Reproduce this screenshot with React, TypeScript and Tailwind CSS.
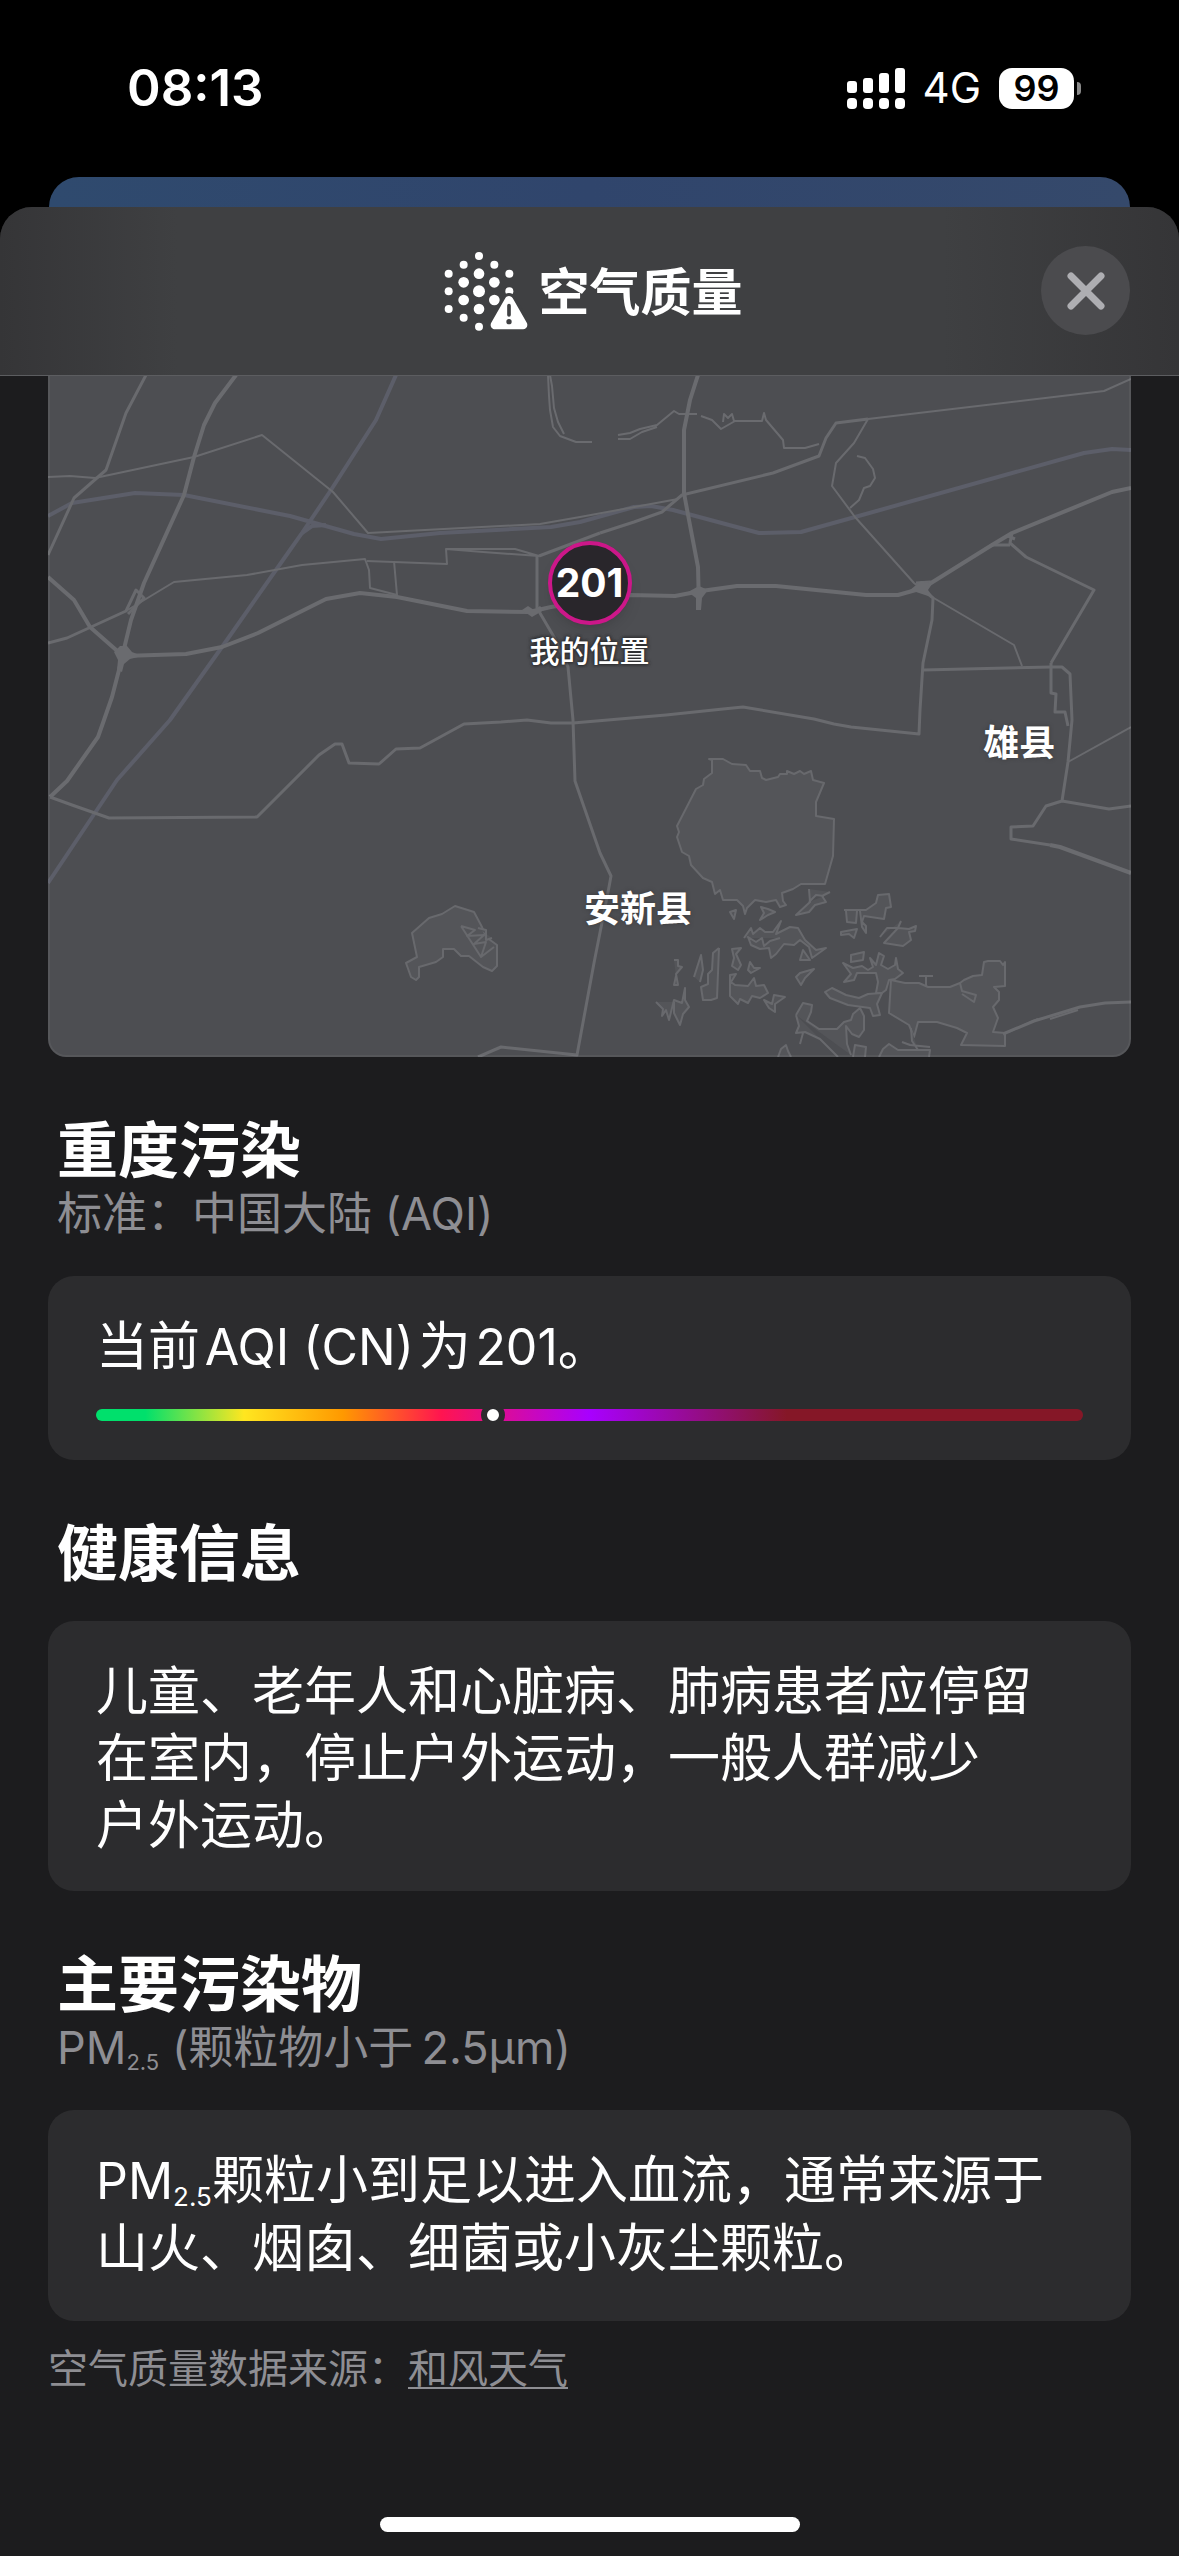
import type { ReactNode } from 'react';

const AQI = 201;
const AQI_MAX = 500;

// 浅色道路
const mainRoads = [
    'M188 -1 167 27 156 49 146 81 136 119 96 207 83 244 75 277 71 294 64 321 56 344 50 361 19 405 2 421',
    'M0 201 26 224 42 251 75 280 138 278 174 271 210 257 278 223 312 217 349 221 419 235 481 236 503 231 582 219 627 220 653 215 689 210 728 210 818 219 850 219 875 212 944 169 964 157 1064 116 1083 112',
    'M650 -1 642 24 636 54 636 117 641 144 650 191 651 232',
    'M1002 469 1012 471 1083 497',
];

const roads = [
    'M98 -1 78 37 58 94 26 122 0 179',
    'M0 267 19 262 78 235 88 214 96 222 80 238',
    'M2 421 24 429 61 442 209 441 271 379 287 368 294 368 301 387 331 388 348 373 372 372 416 348 453 346 479 344 503 347 525 347 618 339 675 333 695 331 766 343 786 348 803 351 871 358 872 334 875 287 884 244 885 222 873 212',
    'M875 294 1003 291 1014 291 1022 298 1024 344 1020 386 1014 425 998 430 985 450 963 451 963 463 1002 469',
    'M1014 425 1061 433 1083 430',
    'M1003 287 1046 214 978 181 962 167 964 157 M944 169 962 169 M960 160 967 163',
    'M1003 287 1003 317 1008 318 1007 336 1017 336 1020 350',
    'M489 180 489 232 506 261 520 291 525 344 527 405 552 477 563 500 561 511 546 587 529 679 453 671 430 681',
    'M552 157 586 146 614 136 634 119 725 97 771 80 778 62 788 47 820 43',
    'M491 180 552 157',
    'M868 207 882 206 875 212',
    'M955 658 986 645 1032 631 1057 627 1083 626',
];

const thinRoads = [
    'M0 101 22 100 47 102 146 81 214 59 285 116 320 157 492 148 532 141 630 123',
    'M78 235 126 206 199 199 254 189 317 183 321 194 322 212 349 219 346 185',
    'M319 185 399 188 398 173 467 173 491 180 435 176 398 173',
    'M820 43 1056 15 1083 3',
    'M820 43 806 67 788 87 784 110 807 141 866 207 884 221 966 269 974 290',
    'M1020 386 1083 351',
    'M1002 643 1030 634 M960 656 990 643',
];

const railways = [
    'M0 140 24 127 87 117 136 119 242 140 306 158 333 163 392 157 503 151 532 146 586 131 603 130 625 134 711 157 753 156 807 141 1036 77 1064 73 1083 74',
    'M348 -1 328 44 283 114 254 157 242 174 174 271 122 344 69 404 0 507',
    'M254 157 264 150 278 149',
];

const rivers = [
    'M500 -1 501 20 502 34 505 51 512 60 528 66 544 66 M502 -1 504 10 506 32 510 46 516 58',
    'M570 59 582 57 592 53 609 49 626 35 631 38 649 38 M570 63 582 63 594 56 609 51',
    'M653 40 664 44 673 53 687 45 714 45 716 37 718 44 735 64 736 72 757 72 771 68 M675 46 676 38 680 42 684 38 686 45',
    'M809 80 817 82 825 93 827 102 822 110 816 112 811 124 802 132',
];

const lakes = [
    'M364 557 381 542 394 538 407 530 426 536 434 551 438 561 449 569 449 590 444 595 435 591 421 580 413 580 406 573 395 573 395 581 388 586 371 591 371 601 368 604 363 601 358 587 369 581z',
    'M413 550 427 554 419 560 436 559 426 568 438 566 433 581 446 571 M413 550 433 581 M430 552 438 554 438 564 444 562',
    'M661 383 675 383 684 388 698 389 702 395 712 395 714 402 718 404 730 401 732 398 739 398 739 395 746 398 752 395 756 398 763 395 765 404 776 407 768 426 768 440 786 443 785 480 777 508 753 508 745 513 734 517 735 525 738 529 732 531 728 524 718 526 707 524 699 532 697 538 695 530 689 524 675 524 672 514 667 518 664 506 655 502 643 489 641 480 634 476 629 461 631 456 629 450 648 413 655 409 656 403 664 397 664 384z',
    'M843 604 857 607 871 607 880 611 902 611 912 607 916 604 925 600 934 599 936 586 940 585 952 585 955 589 957 586 957 610 946 611 951 616 951 624 945 631 950 642 945 656 957 657 957 670 913 669 919 657 909 652 889 646 870 646 866 661 861 649 841 637z',
    'M871 600 885 600 M878 600 878 610 M912 607 914 615 928 619 926 626 914 618',
    'M761 513 762 526 748 539 761 536 767 529 778 526 774 520 782 516 M761 526 768 519 776 520',
    'M796 534 818 534 828 527 830 519 841 518 843 531 838 532 836 543 816 540 814 546 818 550 818 557 814 551 812 535 M798 535 799 546 808 547 809 535',
    'M832 561 839 552 850 552 853 545 M850 552 861 553 868 550 867 555 861 556 863 564 855 570 836 567z',
    'M696 562 703 552 705 558 712 552 717 556 725 556 733 545 728 558 742 551 750 552 757 564 768 574 778 572 764 582 761 571 752 564 746 569 736 568 728 578 723 582 721 572 712 573 703 569 700 561 708 566 714 562 716 570 722 565 732 562',
    'M646 601 653 579 655 594 652 606 M671 572 669 622 663 624 655 624 653 611 660 608 660 598 664 594 665 577 671 572',
    'M626 584 630 584 630 590 634 591 628 598 630 609 626 609 628 600',
    'M608 626 615 633 614 640 618 634 621 644 626 624 634 627 637 612 637 624 641 631 635 638 632 649 626 637 626 626',
    'M684 573 693 572 688 578 693 589 690 594 684 590 686 582z',
    'M682 599 688 598 683 606 687 609 700 610 706 602 708 610 716 609 720 617 712 622 704 620 700 627 692 623 690 628 682 620z',
    'M702 586 706 592 712 592 703 597 700 594z',
    'M716 624 724 628 726 619 737 621 727 628 727 636 721 632z',
    'M748 601 752 597 766 593 757 602 753 609z M752 584 755 574 762 584z',
    'M793 556 809 553 806 562 801 558 793 559z M803 586 803 579 816 576 815 584z',
    'M682 536 688 534 686 543z M713 531 720 533 727 536 720 539 712 544 716 537z',
    'M795 587 805 592 814 590 820 594 825 591 822 582 828 589 831 577 836 580 833 589 840 593 847 589 848 582 850 593 855 597 847 603 841 604 838 614 834 617 828 617 830 606 828 597 809 597 806 604 796 606 803 598z',
    'M777 616 784 612 798 619 811 622 820 618 834 617 829 628 832 639 825 640 822 632 800 629 782 622z',
    'M748 639 755 627 764 629 763 636 759 645 771 653 789 653 796 646 803 644 805 638 812 632 816 640 816 654 811 661 804 658 798 650 799 668 803 679 M748 639 751 650 748 657 757 656 772 663 790 681 M755 657 752 668',
    'M730 681 733 673 738 669 740 675 743 681 M805 681 807 669 818 671 817 681',
    'M831 681 835 673 841 668 850 674 882 674 881 681 M863 652 864 665 870 674 M854 666 862 669 882 671',
];

const particles = [
    [238, 72, 12], [192, 98, 12], [284, 98, 12], [147, 125, 12], [329, 125, 12],
    [238, 125, 16], [192, 151, 16], [284, 151, 16], [147, 178, 12], [238, 178, 18],
    [192, 204, 16], [284, 204, 16], [147, 231, 12], [238, 231, 16], [192, 257, 12], [238, 284, 12],
];

function StatusBar() {
    return (
        <div className="flex h-[177px] items-start justify-between pt-14 pr-[98px] pl-[127px]">
            <span className="text-[51px] leading-[64px] font-semibold">08:13</span>
            <div className="flex h-16 items-center gap-[18px]">
                <svg viewBox="0 0 58 41" className="h-[41px] w-[58px] fill-white">
                    <rect x="0" y="13" width="10" height="12" rx="3" />
                    <rect x="16" y="10" width="10" height="15" rx="3" />
                    <rect x="32" y="5" width="10" height="20" rx="3" />
                    <rect x="48" y="0" width="10" height="25" rx="3" />
                    <rect x="0" y="30" width="10" height="11" rx="4" />
                    <rect x="16" y="30" width="10" height="11" rx="4" />
                    <rect x="32" y="30" width="10" height="11" rx="4" />
                    <rect x="48" y="30" width="10" height="11" rx="4" />
                </svg>
                <span className="text-[42px] leading-[48px]">4G</span>
                <div className="flex items-center gap-[3px]">
                    <div className="flex h-[41px] w-[75px] items-center justify-center rounded-[13px] bg-white text-[36px] font-semibold text-black">
                        99
                    </div>
                    <div className="h-[13px] w-1 rounded-r-full bg-[#8a8a8a]" />
                </div>
            </div>
        </div>
    );
}

function AirQualityIcon() {
    return (
        <svg viewBox="133 57 252 243" className="h-[81px] w-[84px] fill-white">
            {particles.map(([x, y, r]) => (
                <circle key={`${x}-${y}`} cx={x} cy={y} r={r} />
            ))}
            <circle cx="329" cy="178" r="12" />
            <path
                d="M328 205 286 279H370z"
                className="fill-[#3f4042] stroke-[#3f4042] stroke-[44]"
                strokeLinejoin="round"
            />
            <path d="M328 205 286 279H370z" className="stroke-white stroke-[26]" strokeLinejoin="round" />
            <path d="M328 221v28" className="stroke-[#3f4042] stroke-[11]" strokeLinecap="round" />
            <circle cx="328" cy="269" r="8" className="fill-[#3f4042]" />
        </svg>
    );
}

function SheetHeader() {
    return (
        <header className="relative flex h-[169px] items-center justify-center rounded-t-[32px] border-b border-[#5c5d60] bg-[linear-gradient(to_right,#353537,#3f4042_15%,#3f4042_80%,#353537)]">
            <h1 className="flex items-center gap-[10px] pl-2 text-[51px] leading-[64px] font-semibold">
                <AirQualityIcon />
                <span className="pt-[3px]">空气质量</span>
            </h1>
            <button
                type="button"
                aria-label="关闭"
                className="absolute top-[39px] right-[49px] flex size-[89px] items-center justify-center rounded-full bg-[#4b4b4e]"
            >
                <svg viewBox="0 0 38 38" className="size-[38px] stroke-[#aeaeb2]" strokeWidth="7" strokeLinecap="round">
                    <path d="M4 4 34 34M34 4 4 34" />
                </svg>
            </button>
        </header>
    );
}

function AirMap() {
    return (
        <div className="relative mx-12 h-[681px] overflow-hidden rounded-b-[18px] bg-[#4d4e52]">
            <svg
                viewBox="0 0 1083 681"
                preserveAspectRatio="xMidYMid slice"
                className="size-full fill-none"
                strokeLinejoin="round"
            >
                <g className="fill-[#545559] stroke-[#68696d]" strokeWidth="2">
                    {lakes.map((d) => (
                        <path key={d} d={d} />
                    ))}
                </g>
                <g className="stroke-[#6a6b6f]" strokeWidth="2">
                    {rivers.map((d) => (
                        <path key={d} d={d} />
                    ))}
                </g>
                <g className="stroke-[#5c5e69]" strokeWidth="4">
                    {railways.map((d) => (
                        <path key={d} d={d} />
                    ))}
                </g>
                <g className="stroke-[#696a6e]" strokeWidth="2">
                    {thinRoads.map((d) => (
                        <path key={d} d={d} />
                    ))}
                </g>
                <g className="stroke-[#696a6e]" strokeWidth="3">
                    {roads.map((d) => (
                        <path key={d} d={d} />
                    ))}
                </g>
                <g className="stroke-[#6a6b6f]" strokeWidth="4">
                    {mainRoads.map((d) => (
                        <path key={d} d={d} />
                    ))}
                </g>
                {/* 立交 */}
                <g className="fill-[#6a6b6f]">
                    <path d="M66 276 72 270 79 270 84 276 94 280 82 283 76 288 74 296 69 294 70 284z" />
                    <path d="M474 234 480 230 486 234 492 230 496 234 484 241z" />
                    <path d="M640 216 651 210 660 214 654 222 653 234 648 234 648 222z" />
                    <path d="M862 214 873 205 884 208 880 214 886 222z" />
                </g>
            </svg>

            {/* 当前位置 */}
            <div className="absolute top-[165px] left-1/2 flex -translate-x-1/2 flex-col items-center">
                <div className="flex size-[84px] items-center justify-center rounded-full border-4 border-[#cc1789] bg-[#29262b] text-[39px] font-bold shadow-lg">
                    {AQI}
                </div>
                <span className="mt-1 text-[30px] leading-[44px] font-medium [text-shadow:0_0_3px_#2c2c2e,0_0_3px_#2c2c2e,0_0_4px_#2c2c2e]">
                    我的位置
                </span>
            </div>
            <span className="absolute top-[342px] right-[7%] text-[36px] leading-[50px] font-semibold [text-shadow:0_0_4px_#3a3a3c]">
                雄县
            </span>
            <span className="absolute top-[508px] left-[49.5%] text-[36px] leading-[50px] font-semibold [text-shadow:0_0_4px_#3a3a3c]">
                安新县
            </span>
            <div className="absolute inset-0 rounded-b-[18px] border-x-2 border-b-2 border-white/5" />
        </div>
    );
}

function Section({ title, subtitle, children }: { title: string; subtitle?: ReactNode; children: ReactNode }) {
    return (
        <section className="mt-[60px]">
            <h2 className="px-[9px] text-[61px] leading-[68px] font-bold">{title}</h2>
            {subtitle && <p className="px-[9px] text-[45px] leading-[58px] text-[#8e8e93]">{subtitle}</p>}
            <div className="mt-[33px] rounded-[26px] bg-[#2c2c2e] px-12 pt-[37px] pb-8 text-[52px] leading-[67px]">
                {children}
            </div>
        </section>
    );
}

function AqiScale({ value }: { value: number }) {
    return (
        <div className="relative mt-[28px] mb-[7px] h-3 overflow-hidden rounded-full">
            <div className="size-full bg-[linear-gradient(to_right,#00e06c_5%,#ffe620_15%,#ff9900_25%,#ff1450_35%,#a800ff_50%,#851727_70%)]" />
            <div
                className="absolute top-1/2 size-6 -translate-x-1/2 -translate-y-1/2 rounded-full border-[6px] border-[#2c2c2e] bg-white"
                style={{ left: `${(value / AQI_MAX) * 100}%` }}
            />
        </div>
    );
}

export default function App() {
    return (
        <div
            lang="zh-CN"
            className="flex min-h-screen flex-col bg-black font-[Inter,'Noto_Sans_CJK_SC',sans-serif] text-white"
        >
            <StatusBar />
            {/* 背后的天气页 */}
            <div className="mx-[49px] h-[30px] rounded-t-[30px] bg-linear-to-r from-[#2f4a6e] via-[#30456c] to-[#35496b]" />

            <main className="flex flex-1 flex-col rounded-t-[32px] bg-[#1c1c1e]">
                <SheetHeader />
                <AirMap />

                <div className="px-12">
                    <Section title="重度污染" subtitle="标准：中国大陆 (AQI)">
                        <p>
                            当前&#8202;<span className="text-[50px]">AQI (CN)</span>&#8202;为&#8202;
                            <span className="text-[50px]">{AQI}</span>。
                        </p>
                        <AqiScale value={AQI} />
                    </Section>

                    <Section title="健康信息">
                        <p>
                            儿童、老年人和心脏病、肺病患者应停留在室内，停止户外运动，一般人群减少
                            <span className="inline-block">户外运动。</span>
                        </p>
                    </Section>

                    <Section
                        title="主要污染物"
                        subtitle={
                            <>
                                PM<sub className="text-[22px]">2.5</sub> (颗粒物小于&#8201;2.5μm)
                            </>
                        }
                    >
                        <p className="mb-[7px]">
                            <span className="text-[50px]">PM</span>
                            <sub className="text-[26px]">2.5</sub>颗粒小到足以进入血流，通常来源于山火、烟囱、细菌或小灰尘颗粒。
                        </p>
                    </Section>

                    <footer className="mt-5 text-[40px] leading-[56px] text-[#8e8e93]">
                        空气质量数据来源：
                        <a href="#qweather" className="underline decoration-2 underline-offset-4">
                            和风天气
                        </a>
                    </footer>
                </div>

                <div className="mx-auto mt-auto mb-6 h-[15px] w-[420px] rounded-full bg-white" />
            </main>
        </div>
    );
}
